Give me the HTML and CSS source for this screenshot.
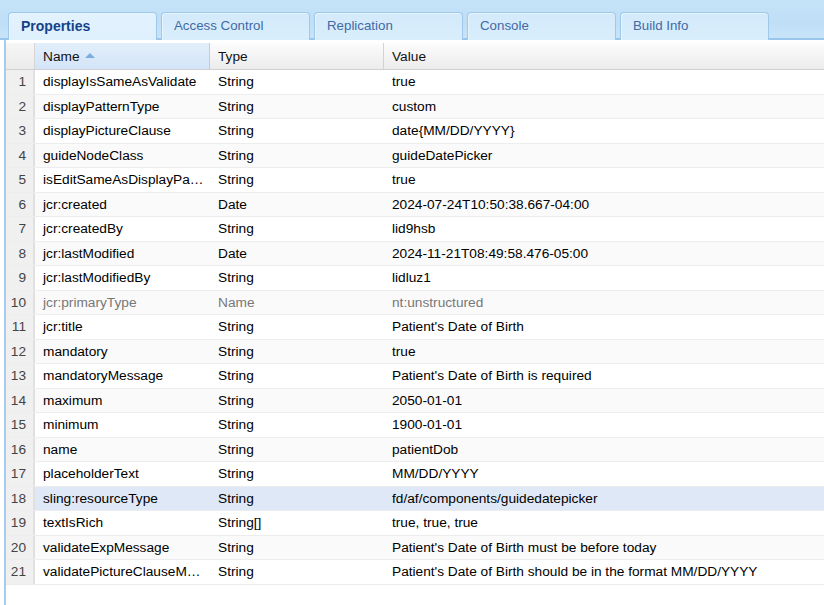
FILE: index.html
```html
<!DOCTYPE html>
<html>
<head>
<meta charset="utf-8">
<link rel="stylesheet" href="styles.css">
</head>
<body>
<div class="tabbar">
  <div class="tab active">Properties</div>
  <div class="tab">Access Control</div>
  <div class="tab">Replication</div>
  <div class="tab">Console</div>
  <div class="tab">Build Info</div>
</div>
<div class="panel">
  <div class="grid">
    <div class="row head">
      <div class="num"></div>
      <div class="c name sorted">Name <span class="arrow"></span></div>
      <div class="c type">Type</div>
      <div class="c value">Value</div>
    </div>
    <div class="row"><div class="num">1</div><div class="c name">displayIsSameAsValidate</div><div class="c type">String</div><div class="c value">true</div></div>
    <div class="row alt"><div class="num">2</div><div class="c name">displayPatternType</div><div class="c type">String</div><div class="c value">custom</div></div>
    <div class="row"><div class="num">3</div><div class="c name">displayPictureClause</div><div class="c type">String</div><div class="c value">date{MM/DD/YYYY}</div></div>
    <div class="row alt"><div class="num">4</div><div class="c name">guideNodeClass</div><div class="c type">String</div><div class="c value">guideDatePicker</div></div>
    <div class="row"><div class="num">5</div><div class="c name">isEditSameAsDisplayPa…</div><div class="c type">String</div><div class="c value">true</div></div>
    <div class="row alt"><div class="num">6</div><div class="c name">jcr:created</div><div class="c type">Date</div><div class="c value">2024-07-24T10:50:38.667-04:00</div></div>
    <div class="row"><div class="num">7</div><div class="c name">jcr:createdBy</div><div class="c type">String</div><div class="c value">lid9hsb</div></div>
    <div class="row alt"><div class="num">8</div><div class="c name">jcr:lastModified</div><div class="c type">Date</div><div class="c value">2024-11-21T08:49:58.476-05:00</div></div>
    <div class="row"><div class="num">9</div><div class="c name">jcr:lastModifiedBy</div><div class="c type">String</div><div class="c value">lidluz1</div></div>
    <div class="row alt dim"><div class="num">10</div><div class="c name">jcr:primaryType</div><div class="c type">Name</div><div class="c value">nt:unstructured</div></div>
    <div class="row"><div class="num">11</div><div class="c name">jcr:title</div><div class="c type">String</div><div class="c value">Patient's Date of Birth</div></div>
    <div class="row alt"><div class="num">12</div><div class="c name">mandatory</div><div class="c type">String</div><div class="c value">true</div></div>
    <div class="row"><div class="num">13</div><div class="c name">mandatoryMessage</div><div class="c type">String</div><div class="c value">Patient's Date of Birth is required</div></div>
    <div class="row alt"><div class="num">14</div><div class="c name">maximum</div><div class="c type">String</div><div class="c value">2050-01-01</div></div>
    <div class="row"><div class="num">15</div><div class="c name">minimum</div><div class="c type">String</div><div class="c value">1900-01-01</div></div>
    <div class="row alt"><div class="num">16</div><div class="c name">name</div><div class="c type">String</div><div class="c value">patientDob</div></div>
    <div class="row"><div class="num">17</div><div class="c name">placeholderText</div><div class="c type">String</div><div class="c value">MM/DD/YYYY</div></div>
    <div class="row sel"><div class="num">18</div><div class="c name">sling:resourceType</div><div class="c type">String</div><div class="c value">fd/af/components/guidedatepicker</div></div>
    <div class="row"><div class="num">19</div><div class="c name">textIsRich</div><div class="c type">String[]</div><div class="c value">true, true, true</div></div>
    <div class="row alt"><div class="num">20</div><div class="c name">validateExpMessage</div><div class="c type">String</div><div class="c value">Patient's Date of Birth must be before today</div></div>
    <div class="row"><div class="num">21</div><div class="c name">validatePictureClauseM…</div><div class="c type">String</div><div class="c value">Patient's Date of Birth should be in the format MM/DD/YYYY</div></div>
  </div>
</div>
</body>
</html>
```

FILE: styles.css
```css
html, body {
  margin: 0;
  padding: 0;
  background: #ffffff;
  font-family: "Liberation Sans", Arial, sans-serif;
  font-size: 13.7px;
  color: #000;
  overflow: hidden;
}

.tabbar {
  height: 40px;
  box-sizing: border-box;
  padding: 12px 0 0 8px;
  display: flex;
  gap: 4px;
  background: linear-gradient(#c5e3f8, #bfdff7 60%, #c8e4f8);
  border-bottom: 2px solid #99c6ec;
}

.tab {
  width: 149px;
  height: 28px;
  box-sizing: border-box;
  border: 1px solid #9fc8ea;
  border-bottom: none;
  border-radius: 4px 4px 0 0;
  background: linear-gradient(#d3eafb, #d9eefc);
  color: #3f6aa6;
  font-size: 13.3px;
  padding: 5px 0 0 12px;
  box-shadow: inset 1px 1px 0 #e6f4fe;
}

.tab.active {
  background: linear-gradient(#e2f2fe, #dff0fd);
  color: #15428b;
  font-weight: bold;
  font-size: 14px;
}

.panel {
  margin-left: 4px;
  border-left: 2px solid #a6cbee;
  height: 565px;
  padding-top: 3px;
  box-sizing: border-box;
}

.grid {
  display: flex;
  flex-direction: column;
}

.row {
  display: flex;
  height: 24.5px;
  box-sizing: border-box;
  border-bottom: 1px solid #ededed;
  align-items: stretch;
  background: #fff;
}

.row.alt {
  background: #fafafa;
}

.row.sel {
  background: #dfe8f6;
}

.row.dim .c {
  color: #777;
}

.num {
  width: 29px;
  flex: none;
  box-sizing: border-box;
  background: #f0f0f0;
  border-right: 2px solid #e0e0e0;
  color: #444;
  text-align: right;
  padding-right: 7px;
  display: flex;
  align-items: center;
  justify-content: flex-end;
}

.c {
  box-sizing: border-box;
  padding-left: 8px;
  display: flex;
  align-items: center;
  white-space: nowrap;
  overflow: hidden;
}

.name { width: 175px; flex: none; }
.type { width: 174px; flex: none; }
.value { flex: 1; }

.row.head {
  height: 27px;
  background: linear-gradient(#fcfcfc, #ececec);
  border-bottom: 1px solid #d0d0d0;
}

.row.head .num {
  background: linear-gradient(#f6f6f6, #ebebeb);
  border-right: 1px solid #d6d6d6;
}

.row.head .c {
  border-right: 1px solid #d3d3d3;
  color: #111;
}

.row.head .c.value {
  border-right: none;
}

.row.head .sorted {
  background: linear-gradient(#e3eefb, #d3e5f8);
  border-right: 1px solid #b8cfe8;
}

.arrow {
  display: inline-block;
  width: 0;
  height: 0;
  border-left: 5px solid transparent;
  border-right: 5px solid transparent;
  border-bottom: 5px solid #7aaee2;
  margin-left: 5px;
  margin-top: -1px;
}
```
